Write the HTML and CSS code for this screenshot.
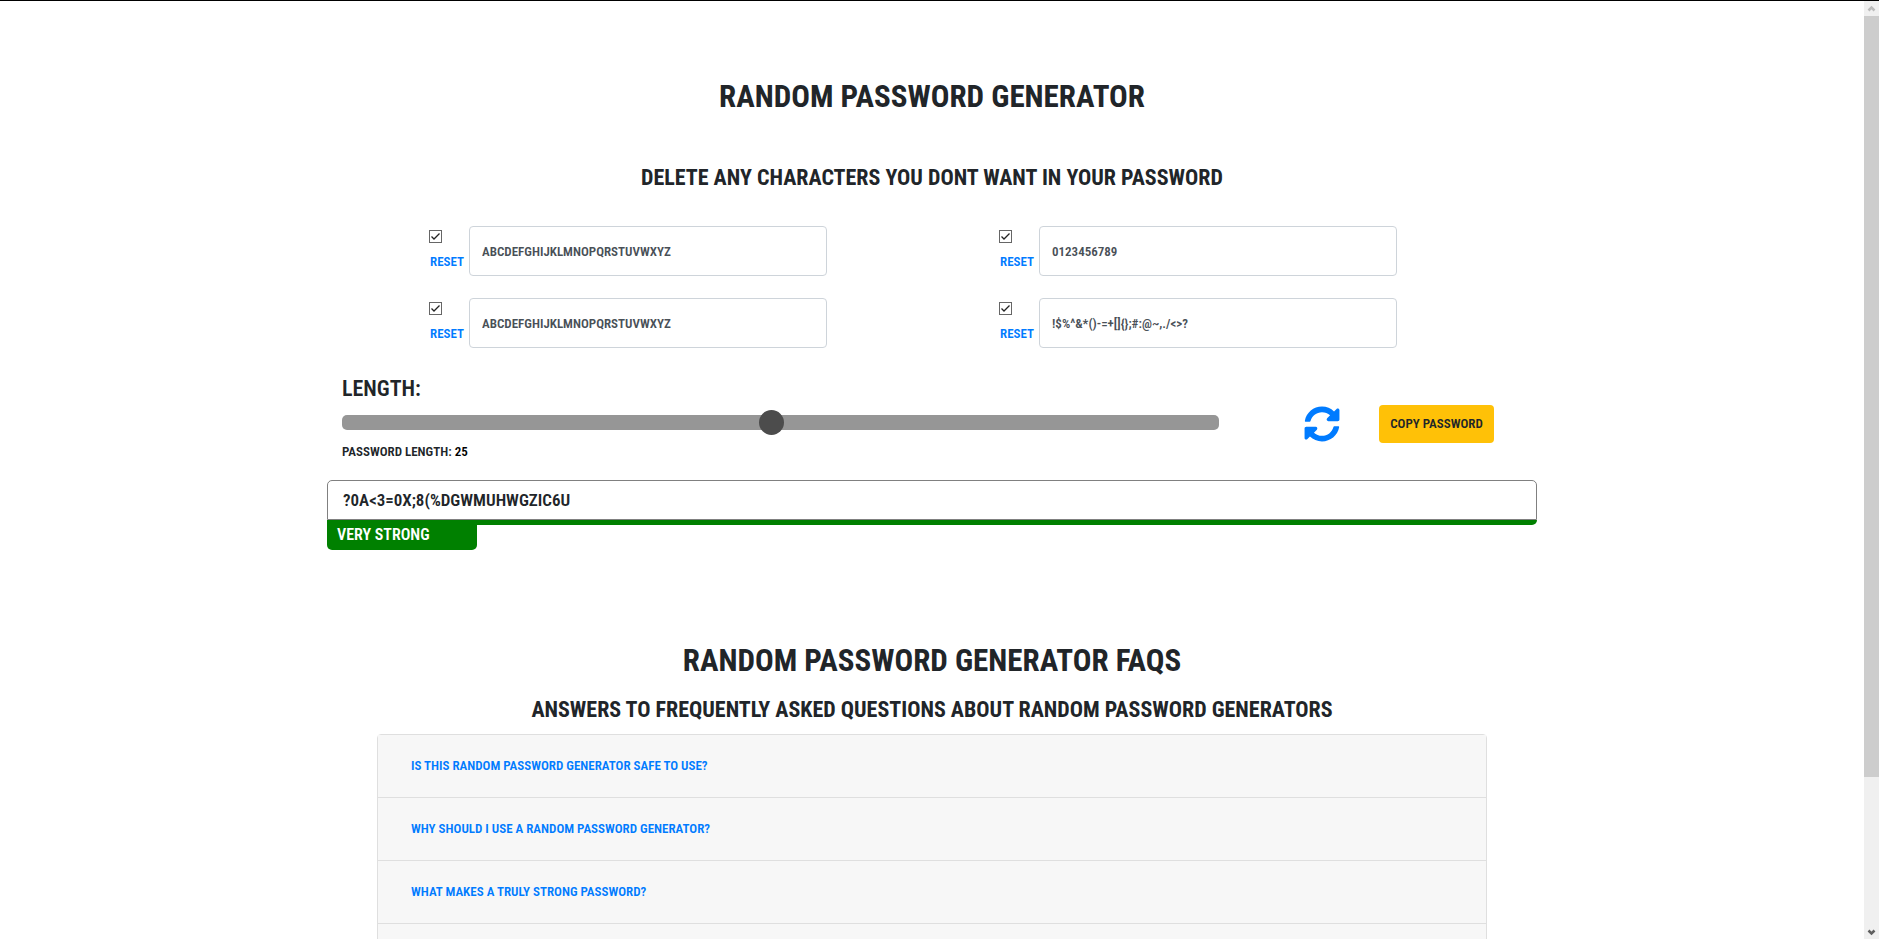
FILE: index.html
```html
<!DOCTYPE html>
<html lang="en">
<head>
<meta charset="utf-8">
<meta name="viewport" content="width=device-width, initial-scale=1">
<title>Random Password Generator</title>
<link rel="stylesheet" href="styles.css">
</head>
<body>
<div class="viewport">
  <main class="page">
    <section class="generator">
      <h1 class="title">RANDOM PASSWORD GENERATOR</h1>
      <h2 class="subtitle">DELETE ANY CHARACTERS YOU DONT WANT IN YOUR PASSWORD</h2>

      <div class="sets">
        <div class="set">
          <div class="set-side">
            <input class="tick" type="checkbox" aria-label="Use uppercase letters" checked>
            <button class="reset" type="button">RESET</button>
          </div>
          <input class="chars" type="text" aria-label="Uppercase letters" value="ABCDEFGHIJKLMNOPQRSTUVWXYZ">
        </div>
        <div class="set">
          <div class="set-side">
            <input class="tick" type="checkbox" aria-label="Use numbers" checked>
            <button class="reset" type="button">RESET</button>
          </div>
          <input class="chars" type="text" aria-label="Numbers" value="0123456789">
        </div>
        <div class="set">
          <div class="set-side">
            <input class="tick" type="checkbox" aria-label="Use lowercase letters" checked>
            <button class="reset" type="button">RESET</button>
          </div>
          <input class="chars" type="text" aria-label="Lowercase letters" value="ABCDEFGHIJKLMNOPQRSTUVWXYZ">
        </div>
        <div class="set">
          <div class="set-side">
            <input class="tick" type="checkbox" aria-label="Use symbols" checked>
            <button class="reset" type="button">RESET</button>
          </div>
          <input class="chars" type="text" aria-label="Symbols" value="!$%^&amp;*()-=+[]{};#:@~,./&lt;&gt;?">
        </div>
      </div>

      <div class="controls">
        <div class="length">
          <label class="length-title" for="length">LENGTH:</label>
          <input class="slider" id="length" type="range" min="1" max="50" value="25">
          <p class="length-value">PASSWORD LENGTH: <output class="count" for="length">25</output></p>
        </div>
        <button class="refresh" type="button" aria-label="Generate a new password">
          <svg class="refresh-icon" viewBox="0 0 512 512" aria-hidden="true"><path fill="currentColor" d="M370.72 133.28C339.458 104.008 298.888 87.962 255.848 88c-77.458.068-144.328 53.178-162.791 126.85-1.344 5.363-6.122 9.15-11.651 9.15H24.103c-7.498 0-13.194-6.807-11.807-14.176C33.933 94.924 134.813 8 256 8c66.448 0 126.791 26.136 171.315 68.685L463.03 40.97C478.149 25.851 504 36.559 504 57.941V192c0 13.255-10.745 24-24 24H345.941c-21.382 0-32.09-25.851-16.971-40.971l41.75-41.749zM32 296h134.059c21.382 0 32.09 25.851 16.971 40.971l-41.75 41.75c31.262 29.273 71.835 45.319 114.876 45.28 77.418-.07 144.315-53.144 162.787-126.849 1.344-5.363 6.122-9.15 11.651-9.15h57.304c7.498 0 13.194 6.807 11.807 14.176C478.067 417.076 377.187 504 256 504c-66.448 0-126.791-26.136-171.315-68.685L48.97 471.03C33.851 486.149 8 475.441 8 454.059V320c0-13.255 10.745-24 24-24z"/></svg>
        </button>
        <button class="copy" type="button">COPY PASSWORD</button>
      </div>

      <div class="result">
        <input class="password" type="text" aria-label="Generated password" value="?0A&lt;3=0X;8(%DGWMUHWGZIC6U" readonly>
        <div class="strength-bar"></div>
        <div class="strength">VERY STRONG</div>
      </div>
    </section>

    <section class="faq">
      <h2 class="title">RANDOM PASSWORD GENERATOR FAQS</h2>
      <h3 class="subtitle">ANSWERS TO FREQUENTLY ASKED QUESTIONS ABOUT RANDOM PASSWORD GENERATORS</h3>
      <div class="accordion">
        <div class="card"><button class="question" type="button">IS THIS RANDOM PASSWORD GENERATOR SAFE TO USE?</button></div>
        <div class="card"><button class="question" type="button">WHY SHOULD I USE A RANDOM PASSWORD GENERATOR?</button></div>
        <div class="card"><button class="question" type="button">WHAT MAKES A TRULY STRONG PASSWORD?</button></div>
        <div class="card"></div>
      </div>
    </section>
  </main>
  <div class="scrollbar" aria-hidden="true">
    <svg class="arrow arrow-off" viewBox="0 0 15 15"><path d="M4.500 9.500 7.500 6.500l3 3" fill="none" stroke="currentColor" stroke-width="2.500"/></svg>
    <div class="thumb"></div>
    <div class="track"></div>
    <svg class="arrow" viewBox="0 0 15 15"><path d="M4.500 6.500l3 3 3-3" fill="none" stroke="currentColor" stroke-width="2.500"/></svg>
  </div>
</div>
</body>
</html>
```
FILE: styles.css
```css
:root {
  --ink: #212529;
  --blue: #007bff;
  --line: #ced4da;
  --green: #008000;
  --text: 13px;
}

* { box-sizing: border-box; }

body {
  margin: 0;
  color: var(--ink);
  background: #fff;
  font-family: "Roboto Condensed", "Liberation Sans Narrow", "Open Sans Condensed", "Liberation Sans", sans-serif;
  font-size: var(--text);
  font-weight: 600;
  line-height: 24px;
}

button, input { font: inherit; }
h1, h2, h3, p { margin: 0; }

.viewport {
  display: flex;
  height: 100vh;
  border-top: 1px solid #000;
  overflow: hidden;
}

.page {
  flex: 1;
  min-width: 0;
  overflow: hidden;
}

.generator {
  width: 65%;
  max-width: 1210px;
  margin: 0 auto;
  padding-top: 72px;
}

.title {
  font-size: 31px;
  line-height: 48px;
  text-align: center;
}

.subtitle {
  font-size: 22px;
  line-height: 32px;
  text-align: center;
}

.generator .subtitle { margin-top: 41px; }

.sets {
  display: grid;
  grid-template-columns: 1fr 1fr;
  row-gap: 22px;
  margin-top: 32px;
  padding: 0 35px;
}

.set {
  display: flex;
  padding-left: 67px;
}

.set-side {
  display: flex;
  flex: none;
  flex-direction: column;
  align-items: flex-start;
  width: 40px;
}

.tick {
  appearance: none;
  width: 13px;
  height: 13px;
  margin: 4px 0 7px;
  border: 1px solid #666;
  background: #fff url("data:image/svg+xml,%3Csvg xmlns='http://www.w3.org/2000/svg' viewBox='0 0 11 11'%3E%3Cpath d='M1.500 5.500l2.500 2.500 5.500-5.500' fill='none' stroke='%23222' stroke-width='1.300'/%3E%3C/svg%3E") center / 11px 11px;
}

.reset, .question {
  padding: 0;
  border: 0;
  background: none;
  color: var(--blue);
  cursor: pointer;
}

.reset { padding-left: 1px; }

.chars {
  flex: 0 1 358px;
  min-width: 0;
  height: 50px;
  padding: 0 12px;
  border: 1px solid var(--line);
  border-radius: 4px;
  color: #495057;
  background: #fff;
}

.controls {
  display: flex;
  align-items: center;
  margin-top: 25px;
  padding: 0 43px 0 15px;
}

.length {
  flex: 1;
  min-width: 0;
}

.length-title {
  display: block;
  font-size: 22px;
  line-height: 32px;
}

.slider {
  appearance: none;
  display: block;
  width: 100%;
  height: 15px;
  margin: 10px 0;
  border-radius: 5px;
  background: #969696;
}

.slider::-webkit-slider-thumb {
  appearance: none;
  width: 25px;
  height: 25px;
  border-radius: 50%;
  background: #4c4c4c;
}

.count { color: #000; }

.refresh, .copy { margin-top: 10px; }

.refresh {
  width: 36px;
  height: 36px;
  margin-right: 39px;
  margin-left: 85px;
  padding: 0;
  border: 0;
  background: none;
  color: var(--blue);
}

.refresh-icon {
  display: block;
  width: 36px;
  height: 36px;
}

.copy {
  width: 115px;
  height: 38px;
  padding: 0;
  border: 0;
  border-radius: 4px;
  background: #ffc107;
  color: var(--ink);
  white-space: nowrap;
}

.result {
  margin-top: 16px;
  font-size: 17px;
}

.password {
  display: block;
  width: 100%;
  height: 40px;
  padding: 0 15px;
  border: 1px solid #808080;
  border-radius: 5px 5px 0 0;
  background: #fff;
  color: var(--ink);
}

.strength-bar {
  height: 5px;
  border-radius: 0 0 5px 5px;
  background: var(--green);
}

.strength {
  width: 150px;
  height: 30px;
  margin-top: -5px;
  padding: 3px 10px;
  border-radius: 0 0 5px 5px;
  background: var(--green);
  color: #fff;
  font-size: 16px;
}

.faq {
  width: 1110px;
  max-width: 100%;
  margin: 0 auto;
  padding-top: 87px;
}

.faq .subtitle { margin-top: 9px; }

.accordion {
  margin-top: 8px;
  border: 1px solid #dfdfdf;
  border-radius: 4px;
}

.card {
  display: flex;
  align-items: center;
  height: 63px;
  padding: 0 33px;
  border-bottom: 1px solid #dfdfdf;
  background: #f7f7f7;
}

.scrollbar {
  display: flex;
  flex: none;
  flex-direction: column;
  width: 15px;
  background: #f0f0f0;
}

.arrow {
  flex: none;
  width: 15px;
  height: 15px;
  color: #606060;
}

.arrow-off { color: #bbb; }
.track { flex: 147; }

.thumb {
  flex: 761;
  background: #cdcdcd;
}
```
